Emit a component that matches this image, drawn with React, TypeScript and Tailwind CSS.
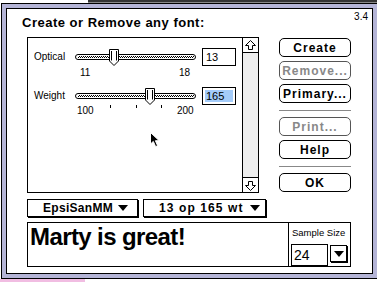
import React from 'react';

const sans = "font-['Liberation_Sans',Arial,sans-serif]";

const Slider: React.FC<{ thumb: number }> = ({ thumb }) => (
  <svg width="122" height="18" viewBox="0 0 122 18" className="block">
    <defs>
      <pattern id="dither" width="2" height="2" patternUnits="userSpaceOnUse">
        <rect width="2" height="2" fill="#fff" />
        <rect width="1" height="1" fill="#000" />
        <rect x="1" y="1" width="1" height="1" fill="#000" />
      </pattern>
    </defs>
    <rect x="0.5" y="6.5" width="120" height="5" rx="2.5" fill="#fff" stroke="#000" />
    <rect x="3" y="8" width="116" height="2" fill="url(#dither)" />
    <path
      d={`M${thumb - 4.5} 1.5 L${thumb + 4.5} 1.5 L${thumb + 4.5} 13 L${thumb} 17.5 L${thumb - 4.5} 13 Z`}
      fill="#fff"
      stroke="#000"
    />
    <path d={`M${thumb - 2.5} 3 L${thumb - 2.5} 12.5 M${thumb + 2.5} 3 L${thumb + 2.5} 12.5`} stroke="#000" />
  </svg>
);

const Arrow: React.FC<{ down?: boolean }> = ({ down }) => (
  <svg width="15" height="15" viewBox="0 0 15 15" className={`block ${down ? 'rotate-180' : ''}`}>
    <path d="M7.5 2.5 L12.5 7.5 L9.5 7.5 L9.5 11.5 L5.5 11.5 L5.5 7.5 L2.5 7.5 Z" fill="#fff" stroke="#000" />
  </svg>
);

const Tri: React.FC = () => (
  <svg width="10" height="6" viewBox="0 0 10 6" className="block">
    <path d="M0 0 L10 0 L5 6 Z" fill="#000" />
  </svg>
);

const Button: React.FC<{ label: string; disabled?: boolean }> = ({ label, disabled }) => (
  <div
    className={`h-[19px] w-[72px] rounded-[5px] border flex items-center justify-center text-[12px] font-bold tracking-[1px] leading-none ${
      disabled ? 'border-[#555] text-[#888]' : 'border-black text-black'
    }`}
  >
    {label}
  </div>
);

export default function App() {
  return (
    <div className={`relative w-[377px] h-[282px] overflow-hidden bg-white ${sans}`}>
      {/* window behind */}
      <div className="flex h-[3px]">
        <div className="w-[88px]" />
        <div className="flex-1 bg-[#333] border-b border-[#888]" />
      </div>

      {/* dialog frame */}
      <div className="ml-[1px] w-[377px] h-[276px] border border-black bg-[#b4b4d6] p-[4px]">
        <div className="h-full border border-black bg-white">
          {/* header */}
          <div className="flex justify-between h-[28px] pl-[15px] pr-[4px]">
            <span className="mt-[7px] text-[13px] leading-[13px] font-bold tracking-[0.5px]">
              Create or Remove any font:
            </span>
            <span className="mt-[3px] text-[10px] leading-[10px]">3.4</span>
          </div>

          {/* main area */}
          <div className="flex pl-[20px]">
            <div className="w-[232px] h-[156px] border border-black flex">
              <div className="flex-1 pl-[6px]">
                <div className="mt-[10px] flex items-center h-[18px]">
                  <span className="w-[41px] text-[10px] leading-none">Optical</span>
                  <Slider thumb={39} />
                  <div className="ml-[5px] w-[34px] h-[18px] border border-black text-[11px] leading-none flex items-center pl-[3px]">
                    13
                  </div>
                </div>
                <div className="mt-[2px] ml-[41px] w-[122px] flex justify-between text-[10px] leading-[10px] pl-[5px] pr-[7px]">
                  <span>11</span>
                  <span>18</span>
                </div>
                <div className="mt-[9px] flex items-center h-[18px]">
                  <span className="w-[41px] text-[10px] leading-none">Weight</span>
                  <Slider thumb={75} />
                  <div className="ml-[5px] w-[34px] h-[18px] border border-black flex p-[2px]">
                    <div className="flex-1 bg-[#a4ccfa] text-[11px] leading-none flex items-center pl-[1px]">165</div>
                  </div>
                </div>
                <div className="ml-[43px] flex items-start text-[10px] leading-[10px]">
                  <span className="w-[20px] mt-[1px]">100</span>
                  <span className="ml-[13px] w-px h-[3px] bg-black" />
                  <span className="ml-[25px] w-px h-[3px] bg-black" />
                  <span className="ml-[24px] w-px h-[3px] bg-black" />
                  <span className="ml-[15px] mt-[1px]">200</span>
                </div>
              </div>
              {/* scrollbar */}
              <div className="w-[16px] border-l border-black flex flex-col">
                <div className="h-[15px] border-b border-black">
                  <Arrow />
                </div>
                <div className="flex-1 bg-[#eeeeee]" />
                <div className="h-[15px] border-t border-black">
                  <Arrow down />
                </div>
              </div>
            </div>

            {/* buttons */}
            <div className="ml-[20px] mt-[1px] flex flex-col">
              <div className="flex flex-col gap-[4px]">
                <Button label="Create" />
                <Button label="Remove..." disabled />
                <Button label="Primary..." />
              </div>
              <div className="mt-[7px] h-px w-[72px] bg-[#888]" />
              <div className="mt-[6px] flex flex-col gap-[4px]">
                <Button label="Print..." disabled />
                <Button label="Help" />
              </div>
              <div className="mt-[7px] h-px w-[72px] bg-[#888]" />
              <div className="mt-[6px]">
                <Button label="OK" />
              </div>
            </div>
          </div>

          {/* popups */}
          <div className="mt-[6px] pl-[20px] flex gap-[5px]">
            <div className="w-[111px] h-[18px] border border-black shadow-[1px_1px_0_#000] flex items-center pl-[15px] text-[12px] font-bold tracking-[0.3px] leading-none">
              <span>EpsiSanMM</span>
              <span className="ml-[5px]">
                <Tri />
              </span>
            </div>
            <div className="w-[123px] h-[18px] border border-black shadow-[1px_1px_0_#000] flex items-center pl-[15px] text-[12px] font-bold tracking-[1.1px] leading-none">
              <span>13 op 165 wt</span>
              <span className="ml-[6px]">
                <Tri />
              </span>
            </div>
          </div>

          {/* sample */}
          <div className="mt-[5px] pl-[20px]">
            <div className="w-[324px] h-[45px] border border-black flex">
              <div className="w-[260px] pl-[2px] pt-[2px]">
                <span className="text-[24px] leading-[24px] font-bold tracking-[-0.6px]">Marty is great!</span>
              </div>
              <div className="flex-1 border-l border-black pl-[2px]">
                <div className="mt-[5px] text-[9.5px] leading-[10px] pl-[1px]">Sample Size</div>
                <div className="mt-[6px] flex items-start">
                  <div className="w-[37px] h-[22px] border border-black text-[14px] leading-none flex items-center pl-[2px]">
                    24
                  </div>
                  <div className="ml-[2px] mt-[1px] w-[17px] h-[17px] border border-black shadow-[1px_1px_0_#000] flex items-center justify-center">
                    <Tri />
                  </div>
                </div>
              </div>
            </div>
          </div>
        </div>
      </div>

      {/* desktop pattern below */}
      <div className="h-[3px] w-[85px] bg-[radial-gradient(#e070c0_0.6px,transparent_0.8px)] bg-[size:2px_2px]" />

      {/* mouse pointer */}
      <svg width="12" height="17" viewBox="0 0 12 17" className="absolute left-[150px] top-[132px]">
        <path d="M0.5 0.5 L0.5 12 L3.3 9.4 L5.6 14.6 L7.6 13.7 L5.4 8.7 L9.2 8.7 Z" fill="#000" stroke="#fff" />
      </svg>
    </div>
  );
}
